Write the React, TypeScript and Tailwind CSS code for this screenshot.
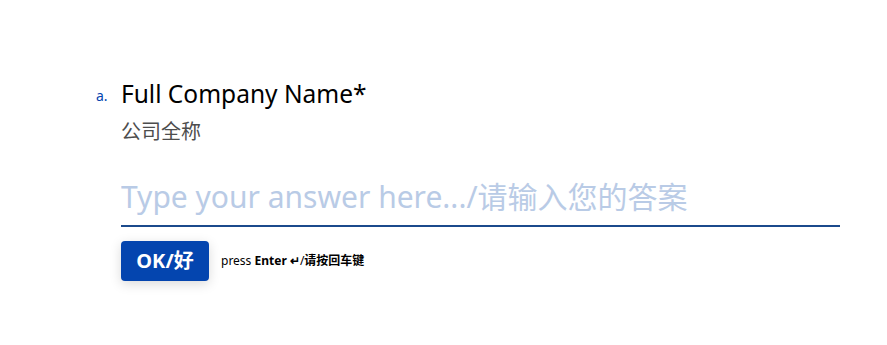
export default function App() {
  return (
    <div
      className="min-h-[345px] w-full bg-white pl-[96px] pt-[78px]"
      style={{ fontFamily: '"Noto Sans", "Noto Sans CJK SC", sans-serif' }}
    >
      <div className="flex">
        <span className="w-[25px] pt-[8px] text-[14px] leading-[20px] text-[#0445af]">a.</span>
        <div className="flex w-[719px] flex-col">
          <h1 className="text-[24.5px] leading-[32px] text-black">Full Company Name*</h1>
          <p className="mt-[9px] text-[20px] leading-[26px] text-[#4d4d4d]">公司全称</p>

          <div className="mt-[32px] border-b-2 border-[#1b4a8c] pb-[8px]">
            <input
              className="w-full bg-transparent text-[30px] leading-[40px] text-[#0445af] outline-none placeholder:text-[#b9cbe6]"
              placeholder="Type your answer here.../请输入您的答案"
            />
          </div>

          <div className="mt-[14px] flex items-center gap-[12px]">
            <button className="h-[40px] w-[88px] rounded-[4px] bg-[#0445af] text-[20px] font-bold text-white shadow-[0_3px_12px_0_rgba(0,0,0,0.15)]">
              OK/好
            </button>
            <span className="text-[12px] text-black">
              press <b>Enter ↵</b>/<b>请按回车键</b>
            </span>
          </div>
        </div>
      </div>
    </div>
  );
}
